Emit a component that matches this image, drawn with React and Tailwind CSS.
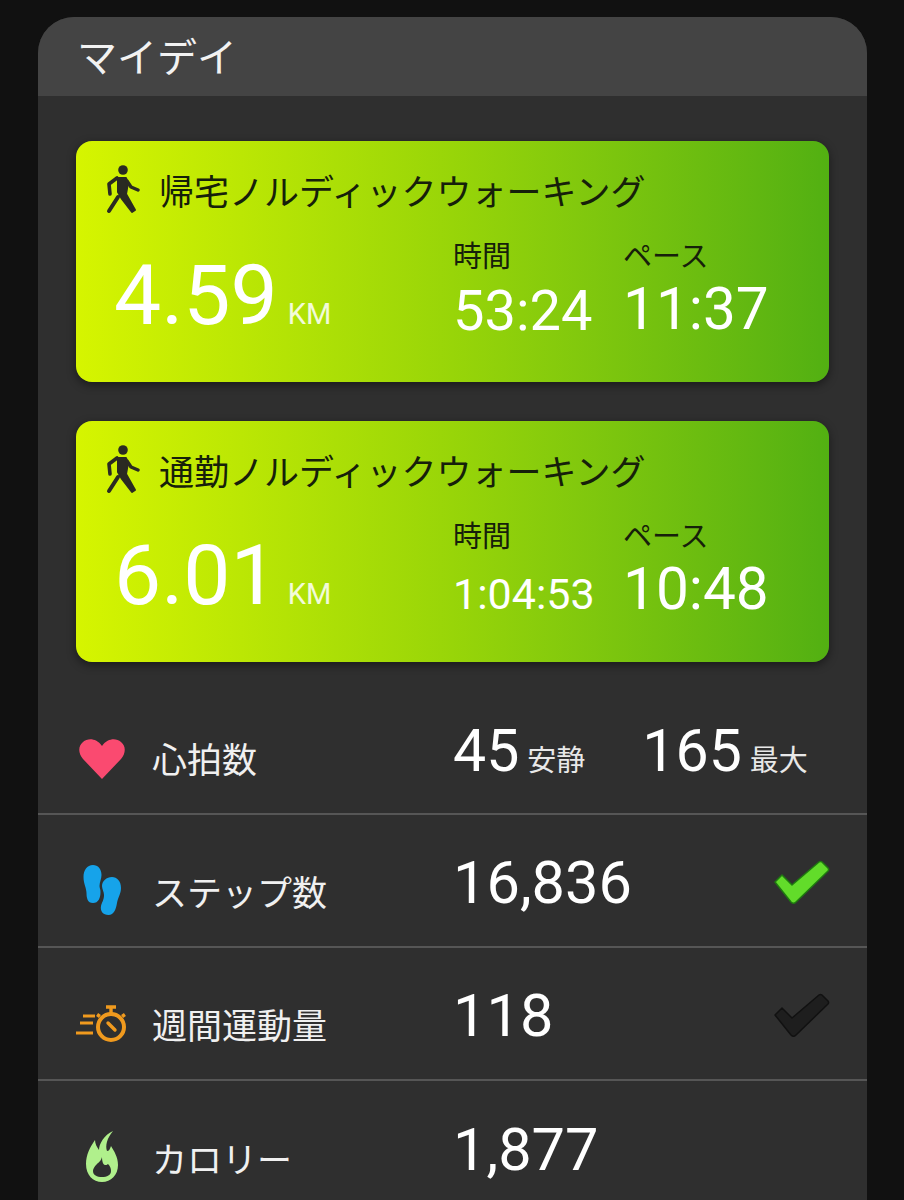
function WalkIcon() {
  return (
    <svg viewBox="0 0 36 52" className="w-9 h-[52px] shrink-0">
      <circle cx="19" cy="6" r="4.800" fill="#2a2a22" />
      <path d="M14 14h8l2 5-2 11 9 16-3 2-10-13-4-7z" fill="#2a2a22" stroke="#2a2a22" strokeWidth="2" strokeLinejoin="round" />
      <path d="M13 14 5 20l1 10" fill="none" stroke="#2a2a22" strokeWidth="3.600" strokeLinecap="round" strokeLinejoin="round" />
      <path d="M23 17l4 6 7 3" fill="none" stroke="#2a2a22" strokeWidth="3.400" strokeLinecap="round" strokeLinejoin="round" />
      <path d="M14 33 5 47" fill="none" stroke="#2a2a22" strokeWidth="4" strokeLinecap="round" />
    </svg>
  );
}

function WorkoutCard({ title, dist, time, timeSmall, pace }) {
  return (
    <div className="h-[241px] rounded-2xl bg-gradient-to-r from-[#d6f500] via-[#98d508] to-[#52b012] shadow-[0_3px_10px_rgba(0,0,0,0.45)] pl-[28px] pt-[20px]">
      <div className="flex items-center h-[58px] gap-[19px] text-[#16200a]">
        <WalkIcon />
        <span className="text-[35px] leading-none whitespace-nowrap pb-[2px]">{title}</span>
      </div>
      <div className="flex mt-[6px]">
        <div className="w-[349px] pl-[10px] pt-[26px] flex items-baseline text-white">
          <span className="text-[84px] leading-[90px] font-['Roboto']">{dist}</span>
          <span className="ml-[10px] text-[29px] leading-none font-['Roboto'] text-white/85">KM</span>
        </div>
        <div className="w-[170px] pt-[8px]">
          <div className="text-[29px] leading-[42px] text-[#16200a]">時間</div>
          <div className={"h-[68px] flex items-center font-['Roboto'] text-white whitespace-nowrap " + (timeSmall ? "text-[43px] pt-[10px]" : "text-[56px] pt-[4px]")}>{time}</div>
        </div>
        <div className="pt-[8px]">
          <div className="text-[29px] leading-[42px] text-[#16200a]">ペース</div>
          <div className="h-[68px] flex items-center font-['Roboto'] text-white text-[58.500px] pt-[2px]">{pace}</div>
        </div>
      </div>
    </div>
  );
}

function Row({ icon, label, children, right, border = true }) {
  return (
    <div className={"flex items-center h-[133px]" + (border ? " border-b-2 border-[#565656]" : "")}>
      <div className="w-[114px] flex justify-center pl-[13px] shrink-0 pt-[18px]">{icon}</div>
      <div className="w-[301px] shrink-0 text-[35px] leading-none text-[#f0f0f0] pt-[19px] whitespace-nowrap">{label}</div>
      <div className="flex-1 flex items-baseline text-white font-['Roboto'] pt-[6px]">{children}</div>
      {right}
    </div>
  );
}

function Check({ fill, stroke }) {
  return (
    <svg viewBox="0 0 58 46" className="w-[58px] h-[46px] mr-[37px] mt-[4px]">
      <path d="M3 22 10 15 20 25 47 2c1-.8 2-.8 3 0l6 6c.8 1 .8 2 0 3L24 42c-1.500 1.500-3.500 1.500-5 0z" fill={fill} stroke={stroke} strokeWidth="1.500" strokeLinejoin="round" />
    </svg>
  );
}

export default function App() {
  return (
    <div className="h-[1200px] overflow-hidden bg-[#111111] pl-[38px] pt-[17px] pr-[37px] font-['Noto_Sans_CJK_JP','Noto_Sans',sans-serif]">
      <div className="h-[1183px] rounded-t-[36px] bg-[#2f2f2f] overflow-hidden">
        <div className="h-[79px] bg-[#444444] pl-[39px] pb-[3px] flex items-center text-[40px] leading-none text-[#f2f2f2]">マイデイ</div>

        <div className="px-[38px] pt-[45px] flex flex-col gap-[39px]">
          <WorkoutCard title="帰宅ノルディックウォーキング" dist="4.59" time="53:24" pace="11:37" />
          <WorkoutCard title="通勤ノルディックウォーキング" dist="6.01" time="1:04:53" timeSmall pace="10:48" />
        </div>

        <div className="mt-[20px]">
          <Row
            label="心拍数"
            icon={
              <svg viewBox="0 0 46 40" className="w-[46px] h-[40px] mt-[4px]">
                <path d="M23 40 4 20C-1 14-1 7 4 3c5-4 13-4 19 4 6-8 14-8 19-4 5 4 5 11 0 17z" fill="#fa4a70" />
              </svg>
            }
          >
            <span className="text-[59px] leading-none">45</span>
            <span className="ml-[8px] text-[29px] text-[#e8e8e8] font-['Noto_Sans_CJK_JP'] w-[115px]">安静</span>
            <span className="text-[59px] leading-none">165</span>
            <span className="ml-[8px] text-[29px] text-[#e8e8e8] font-['Noto_Sans_CJK_JP']">最大</span>
          </Row>
          <Row
            label="ステップ数"
            icon={
              <svg viewBox="0 0 38 52" className="w-[38px] h-[52px]">
                <path d="M10 1c5 0 8.500 4 8.500 10 0 4-2 7-2 11 0 2 1 3 1 6 0 6-2 11-7.500 11s-6.500-5-6.500-10c0-5-3-9-3-16C.5 6 4 1 10 1z" fill="#16a3ea" />
                <path d="M29 13c5 0 9 4 9 11 0 6-3 9-4 15-1 6-3 12-8.500 12s-8.500-4-7.500-9c1-4 3-6 3-11 0-3-2-6-2-9 0-5 4.500-9 10-9z" fill="#16a3ea" />
              </svg>
            }
            right={<Check fill="#62dc2a" stroke="#1f7a10" />}
          >
            <span className="text-[59.500px] leading-none">16,836</span>
          </Row>
          <Row
            label="週間運動量"
            icon={
              <svg viewBox="0 0 52 37" className="w-[52px] h-[37px] mt-[2px]">
                <g fill="none" stroke="#f09a1e" strokeWidth="3">
                  <circle cx="35" cy="22" r="13" strokeWidth="4" />
                  <path d="M35 8V2M30 2h10M23.500 9l-2 3M46.500 9l2 3" strokeWidth="3.400" />
                  <path d="M32 18l7 7" strokeLinecap="round" strokeWidth="3.400" />
                  <path d="M7 11h12M4 18h13M0 28h17" />
                </g>
              </svg>
            }
            right={<Check fill="#1e1e1e" stroke="#111111" />}
          >
            <span className="text-[59.500px] leading-none">118</span>
          </Row>
          <Row
            border={false}
            label="カロリー"
            icon={
              <svg viewBox="0 0 32 51" className="w-[32px] h-[51px]">
                <path fillRule="evenodd" d="M27 0C18 4 13 13 13 19 11 16 9 13 9 9 4 16 0 24 0 33c0 11 7 18 16 18s16-7 16-17c0-8-4-14-7-19-1 3-2 5-4 5-2-5 0-13 6-20zM16 26c-1 4-3 5-5 7-3 3-4 5-4 7 0 4 4 6 9 6s9-2 9-6c0-3-1-5-3-7-1 1-2 1-3 1-2 0-3-4-3-8z" fill="#b0f08c" />
              </svg>
            }
          >
            <span className="text-[59.500px] leading-none">1,877</span>
          </Row>
        </div>
      </div>
    </div>
  );
}
